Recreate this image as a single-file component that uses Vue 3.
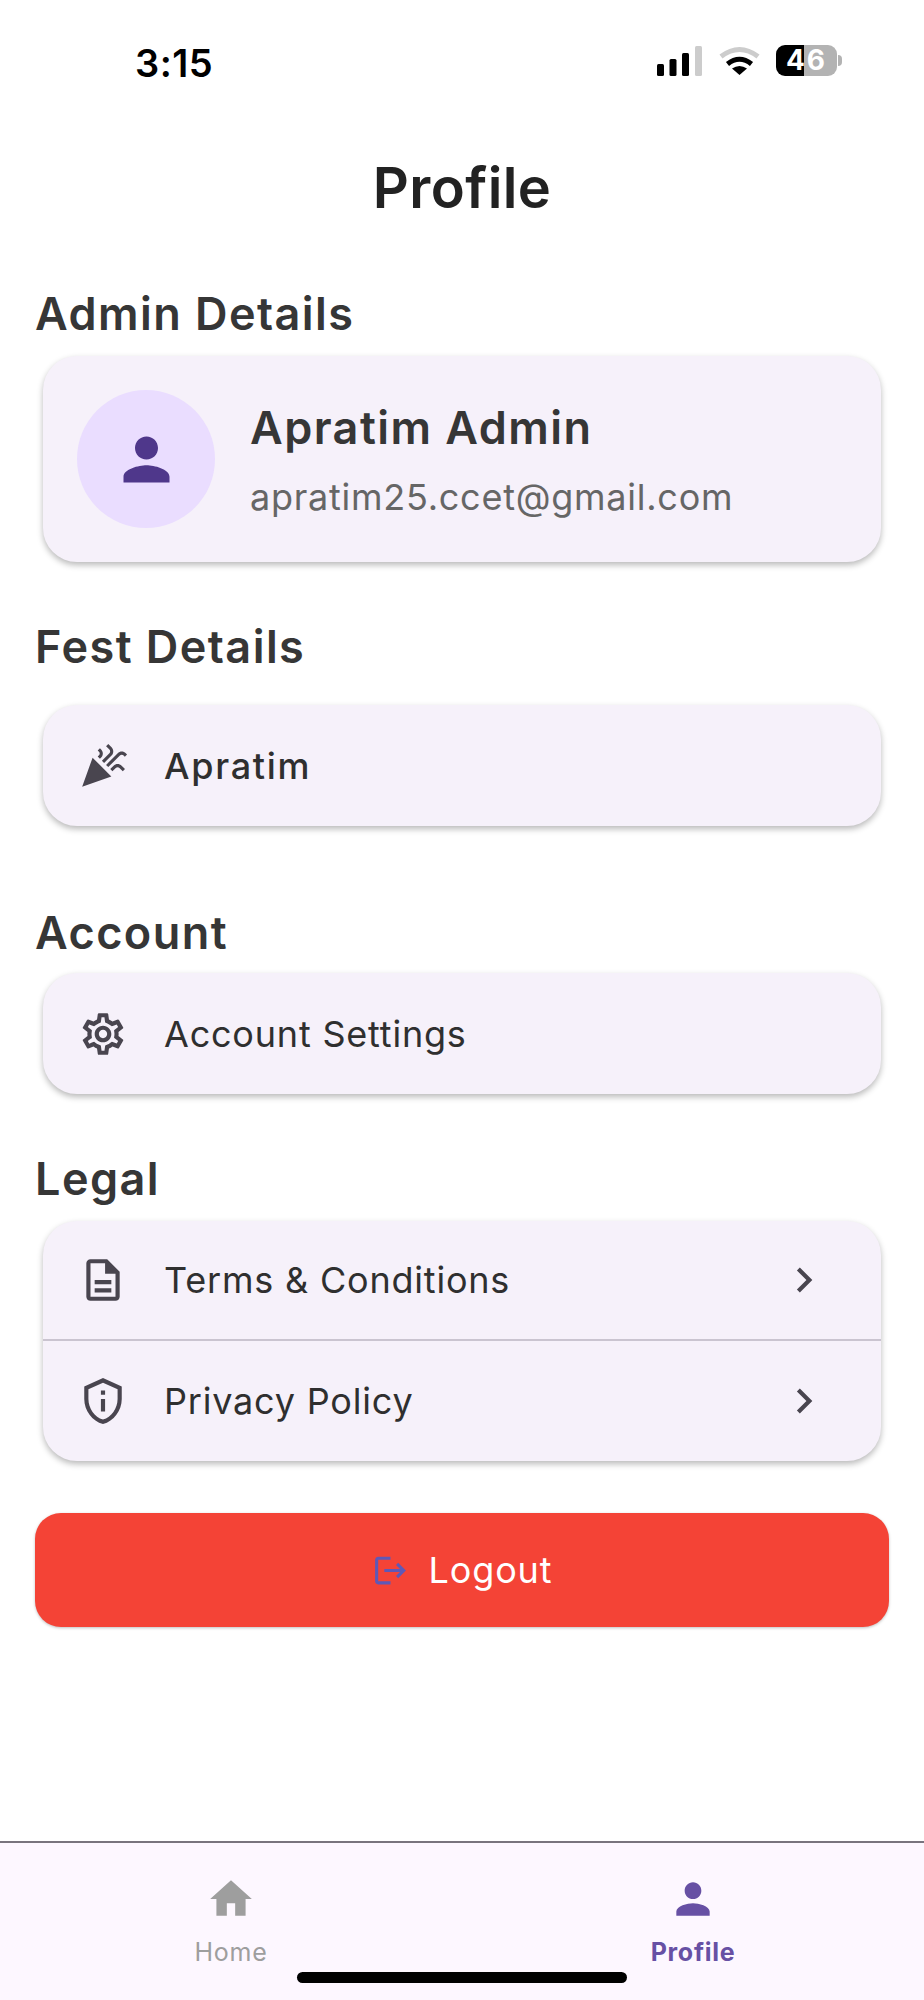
<template>
  <div class="screen">
    <!-- status bar -->
    <div class="status">
      <span class="status__time">3:15</span>
      <div class="status__icons">
        <svg class="signal" width="45" height="30" viewBox="0 0 45 30">
          <rect x="0" y="18" width="7" height="12" rx="1.5" fill="#000" />
          <rect x="12.5" y="13" width="7" height="17" rx="1.5" fill="#000" />
          <rect x="25" y="7" width="7" height="23" rx="1.5" fill="#000" />
          <rect x="38" y="0" width="7" height="30" rx="1.5" fill="#ccc" />
        </svg>
        <svg class="wifi" width="41" height="29" viewBox="0 0 41 29">
          <path d="M2 10.5Q20.5 -3.5 39 10.5" fill="none" stroke="#ccc" stroke-width="5" />
          <path d="M8.5 18Q20.5 8.5 32.5 18" fill="none" stroke="#000" stroke-width="5" />
          <path d="M13 22.5Q20.5 17.5 28 22.5L20.5 29Z" fill="#000" />
        </svg>
        <div class="battery">46</div>
      </div>
    </div>

    <h1 class="title">Profile</h1>

    <h2 class="section-title section-title--admin">Admin Details</h2>
    <div class="card card--admin">
      <div class="avatar">
        <svg width="69" height="69" viewBox="0 0 24 24" fill="#4f378b"><path :d="icons.person" /></svg>
      </div>
      <div class="admin-text">
        <div class="admin-name">Apratim Admin</div>
        <div class="admin-email">apratim25.ccet@gmail.com</div>
      </div>
    </div>

    <h2 class="section-title section-title--fest">Fest Details</h2>
    <div class="card">
      <div class="row row--single">
        <svg class="row__icon" viewBox="0 0 24 24"><path :d="icons.celebration" /></svg>
        <span class="row__label row__label--bold">Apratim</span>
      </div>
    </div>

    <h2 class="section-title section-title--account">Account</h2>
    <div class="card">
      <div class="row row--single">
        <svg class="row__icon" viewBox="0 0 24 24"><path :d="icons.settings" /></svg>
        <span class="row__label">Account Settings</span>
      </div>
    </div>

    <h2 class="section-title section-title--legal">Legal</h2>
    <div class="card">
      <div v-for="(item, i) in legal" :key="item.label" class="row" :class="{ 'row--line': i === 0 }">
        <svg class="row__icon" viewBox="0 0 24 24"><path :d="item.icon" /></svg>
        <span class="row__label">{{ item.label }}</span>
        <svg class="row__icon row__chevron" viewBox="0 0 24 24"><path :d="icons.chevron" /></svg>
      </div>
    </div>

    <button class="logout">
      <svg width="37" height="37" viewBox="0 0 24 24" fill="#5f58b6"><path :d="icons.logout" /></svg>
      <span>Logout</span>
    </button>

    <!-- bottom navigation -->
    <nav class="nav">
      <div class="nav__item">
        <svg width="50" height="50" viewBox="0 0 24 24" fill="#9e9e9e"><path :d="icons.home" /></svg>
        <span>Home</span>
      </div>
      <div class="nav__item nav__item--active">
        <svg width="50" height="50" viewBox="0 0 24 24" fill="#6750a4"><path :d="icons.person" /></svg>
        <span>Profile</span>
      </div>
      <div class="home-bar"></div>
    </nav>
  </div>
</template>

<script setup>
// Material icon paths
const icons = {
  person: "M12 12c2.21 0 4-1.79 4-4s-1.79-4-4-4-4 1.79-4 4 1.79 4 4 4zm0 2c-2.67 0-8 1.34-8 4v2h16v-2c0-2.66-5.33-4-8-4z",
  home: "M10 20v-6h4v6h5v-8h3L12 3 2 12h3v8z",
  chevron: "M10 6L8.59 7.41 13.17 12l-4.58 4.59L10 18l6-6z",
  logout: "M17 7l-1.41 1.41L18.17 11H8v2h10.17l-2.58 2.58L17 17l5-5zM4 5h8V3H4c-1.1 0-2 .9-2 2v14c0 1.1.9 2 2 2h8v-2H4V5z",
  celebration: "M2 22l14-5L7 8zM14.53 12.53l5.59-5.59c.49-.49 1.28-.49 1.77 0l.59.59 1.06-1.06-.59-.59c-1.07-1.07-2.82-1.07-3.89 0l-5.59 5.59 1.06 1.06zM10.06 6.88l-.59.59 1.06 1.06.59-.59c1.07-1.07 1.07-2.82 0-3.89l-.59-.59-1.06 1.06.59.59c.48.48.48 1.28 0 1.77zM17.06 11.88l-1.59 1.59 1.06 1.06 1.59-1.59c.49-.49 1.28-.49 1.77 0l1.61 1.61 1.06-1.06-1.61-1.61c-1.08-1.07-2.82-1.07-3.89 0zM15.06 5.88l-3.59 3.59 1.06 1.06 3.59-3.59c1.07-1.07 1.07-2.82 0-3.89l-1.59-1.59-1.06 1.06 1.59 1.59c.48.49.48 1.29 0 1.77z",
  settings: "M19.43 12.98c.04-.32.07-.64.07-.98 0-.34-.03-.66-.07-.98l2.11-1.65c.19-.15.24-.42.12-.64l-2-3.46c-.09-.16-.26-.25-.44-.25-.06 0-.12.01-.17.03l-2.49 1c-.52-.4-1.08-.73-1.69-.98l-.38-2.65C14.46 2.18 14.25 2 14 2h-4c-.25 0-.46.18-.49.42l-.38 2.65c-.61.25-1.17.59-1.69.98l-2.49-1c-.06-.02-.12-.03-.18-.03-.17 0-.34.09-.43.25l-2 3.46c-.13.22-.07.49.12.64l2.11 1.65c-.04.32-.07.65-.07.98 0 .33.03.66.07.98l-2.11 1.65c-.19.15-.24.42-.12.64l2 3.46c.09.16.26.25.44.25.06 0 .12-.01.17-.03l2.49-1c.52.4 1.08.73 1.69.98l.38 2.65c.03.24.24.42.49.42h4c.25 0 .46-.18.49-.42l.38-2.65c.61-.25 1.17-.59 1.69-.98l2.49 1c.06.02.12.03.18.03.17 0 .34-.09.43-.25l2-3.46c.12-.22.07-.49-.12-.64l-2.11-1.65zm-1.98-1.71c.04.31.05.52.05.73 0 .21-.02.43-.05.73l-.14 1.13.89.7 1.08.84-.7 1.21-1.27-.51-1.04-.42-.9.68c-.43.32-.84.56-1.25.73l-1.06.43-.16 1.13-.2 1.35h-1.4l-.19-1.35-.16-1.13-1.06-.43c-.43-.18-.83-.41-1.23-.71l-.91-.7-1.06.43-1.27.51-.7-1.21 1.08-.84.89-.7-.14-1.13c-.03-.31-.05-.54-.05-.74s.02-.43.05-.73l.14-1.13-.89-.7-1.08-.84.7-1.21 1.27.51 1.04.42.9-.68c.43-.32.84-.56 1.25-.73l1.06-.43.16-1.13.2-1.35h1.39l.19 1.35.16 1.13 1.06.43c.43.18.83.41 1.23.71l.91.7 1.06-.43 1.27-.51.7 1.21-1.07.85-.89.7.14 1.13zM12 8c-2.21 0-4 1.79-4 4s1.79 4 4 4 4-1.79 4-4-1.79-4-4-4zm0 6c-1.1 0-2-.9-2-2s.9-2 2-2 2 .9 2 2-.9 2-2 2z",
  description: "M8 16h8v2H8zm0-4h8v2H8zm6-10H6c-1.1 0-2 .9-2 2v16c0 1.1.89 2 1.99 2H18c1.1 0 2-.9 2-2V8l-6-6zm4 18H6V4h7v5h5v11z",
  privacy: "M12 3.19l7 3.11V11c0 4.52-2.98 8.69-7 9.93-4.02-1.24-7-5.41-7-9.93V6.3l7-3.11M12 1L3 5v6c0 5.55 3.84 10.74 9 12 5.16-1.26 9-6.45 9-12V5l-9-4zm-1 6h2v2h-2zm0 4h2v6h-2z"
}

const legal = [
  { label: "Terms & Conditions", icon: icons.description },
  { label: "Privacy Policy", icon: icons.privacy }
]
</script>

<style>
body {
  background: #fff;
}
</style>

<style scoped>
.screen {
  display: flex;
  flex-direction: column;
  width: 924px;
  height: 2000px;
  background: #fff;
  font-family: Inter, "Liberation Sans", sans-serif;
  color: #2f2f2f;
}

.status {
  display: flex;
  justify-content: space-between;
  height: 100px;
  padding: 44px 87px 0 135px;
  box-sizing: border-box;
}
.status__time {
  font-size: 38px;
  line-height: 38px;
  font-weight: 600;
  letter-spacing: 0.5px;
  color: #000;
}
.status__icons {
  display: flex;
  align-items: flex-start;
  padding-top: 2px;
}
.wifi {
  margin-left: 17px;
}
.battery {
  position: relative;
  width: 61px;
  height: 31px;
  margin-left: 16px;
  margin-top: -1px;
  border-radius: 9px;
  background: linear-gradient(90deg, #000 46%, #b3b3b3 46%);
  color: #fff;
  font-size: 28px;
  font-weight: 700;
  letter-spacing: 2px;
  line-height: 31px;
  text-align: center;
}
.battery::after {
  content: "";
  position: absolute;
  left: 62px;
  top: 10px;
  width: 4px;
  height: 11px;
  border-radius: 0 6px 6px 0;
  background: #b3b3b3;
}

.title {
  margin: 56px 0 0;
  font-size: 56px;
  line-height: 64px;
  font-weight: 600;
  letter-spacing: 0.4px;
  text-align: center;
  color: #222;
}

.section-title {
  margin: 0 0 17px 35px;
  font-size: 45px;
  line-height: 50px;
  font-weight: 600;
  letter-spacing: 1.45px;
  color: #363636;
}
.section-title--admin {
  margin-top: 69px;
}
.section-title--fest {
  margin-top: 60px;
  margin-bottom: 33px;
}
.section-title--account {
  margin-top: 82px;
  margin-bottom: 15px;
}
.section-title--legal {
  margin-top: 60px;
  margin-bottom: 17px;
}

.card {
  margin: 0 43px;
  border-radius: 34px;
  background: #f6f1fa;
  box-shadow: 0 3px 6px rgba(0, 0, 0, 0.28);
}
.card--admin {
  display: flex;
  align-items: center;
  height: 206px;
  padding-left: 34px;
}

.avatar {
  display: flex;
  flex: none;
  align-items: center;
  justify-content: center;
  width: 138px;
  height: 138px;
  border-radius: 50%;
  background: #eaddff;
}
.admin-text {
  margin-left: 35px;
  padding-top: 2px;
}
.admin-name {
  font-size: 45px;
  line-height: 54px;
  font-weight: 600;
  letter-spacing: 1.45px;
  color: #363636;
}
.admin-email {
  margin-top: 20px;
  font-size: 36px;
  line-height: 44px;
  letter-spacing: 0.75px;
  color: #666;
}

.row {
  display: flex;
  align-items: center;
  height: 120px;
  padding: 0 52px 0 35px;
}
.row--single {
  height: 121px;
}
.row--line {
  height: 118px;
  border-bottom: 2px solid #cac4d0;
}
.row__icon {
  flex: none;
  width: 50px;
  height: 50px;
  fill: #49454f;
}
.row__label {
  margin-left: 36px;
  font-size: 36px;
  letter-spacing: 0.8px;
}
.row__label--bold {
  font-weight: 500;
  letter-spacing: 1.7px;
}
.row__chevron {
  margin-left: auto;
}

.logout {
  display: flex;
  align-items: center;
  justify-content: center;
  gap: 20px;
  height: 114px;
  margin: 52px 35px 0;
  border: none;
  border-radius: 26px;
  background: #f44336;
  box-shadow: 0 1px 3px rgba(0, 0, 0, 0.25);
  color: #fff;
  font-family: inherit;
  font-size: 36px;
  letter-spacing: 0.85px;
}

.nav {
  position: relative;
  display: grid;
  grid-template-columns: 1fr 1fr;
  height: 159px;
  margin-top: auto;
  box-sizing: border-box;
  padding-top: 31px;
  border-top: 2px solid #79747e;
  background: #fdf7ff;
}
.nav__item {
  display: flex;
  flex-direction: column;
  align-items: center;
  font-size: 25px;
  line-height: 30px;
  letter-spacing: 0.7px;
  color: #9e9e9e;
}
.nav__item span {
  margin-top: 13px;
}
.nav__item--active {
  color: #6750a4;
  font-weight: 700;
}
.home-bar {
  position: absolute;
  left: 297px;
  bottom: 17px;
  width: 330px;
  height: 11px;
  border-radius: 6px;
  background: #000;
}
</style>
